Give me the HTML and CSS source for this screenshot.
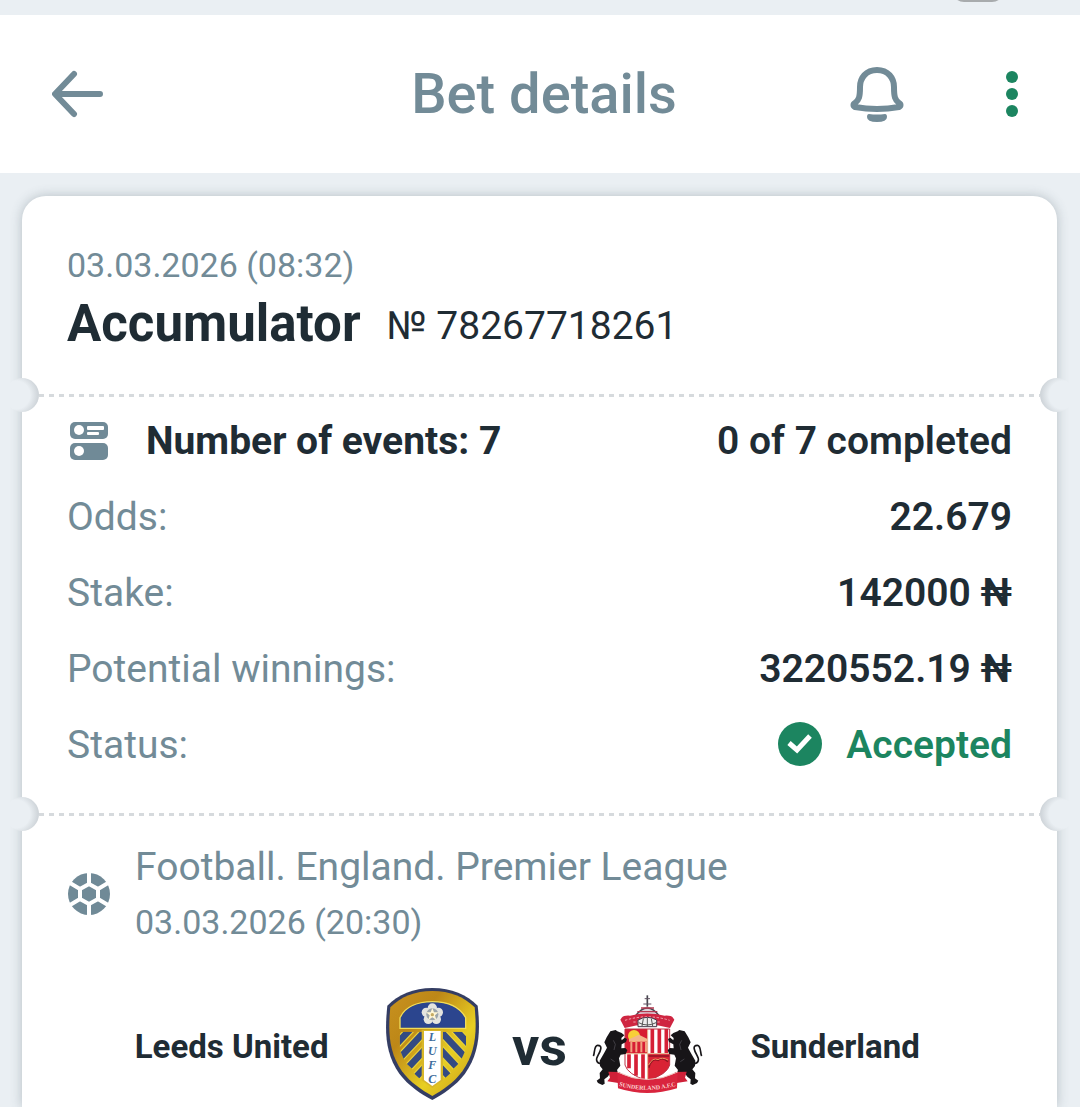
FILE: index.html
```
<!DOCTYPE html>
<html lang="en">
    <head>
        <title>Bet details</title>
        <meta charset="UTF-8">
        <meta name="viewport" content="width=device-width, initial-scale=1">
        <link rel="stylesheet" href="styles.css">
    </head>
    <body>

        <div class="status-bar"><span class="pill"></span></div>

        <header class="top">
            <button class="back" aria-label="Back">
                <svg width="52" height="48" viewBox="0 0 52 48">
                    <path d="M22 4 3 24l19 20M4 24h44" fill="none" stroke="currentColor" stroke-width="6" stroke-linecap="round" stroke-linejoin="round"/>
                </svg>
            </button>
            <h1>Bet details</h1>
            <div class="actions">
                <button aria-label="Notifications">
                    <svg width="56" height="60" viewBox="0 -1 56 60">
                        <path d="M28 5C17 5 11 13 11 22C11 32 10 35 6 38C4 39 4 41 6 42Q28 46 50 42C52 41 52 39 50 38C46 35 45 32 45 22C45 13 39 5 28 5Z" fill="none" stroke="currentColor" stroke-width="6" stroke-linejoin="round"/>
                        <path d="M20 49q8 1 16 0q2 0 2 3q0 5-10 5t-10-5q0-3 2-3z" fill="currentColor"/>
                    </svg>
                </button>
                <button class="more" aria-label="More">
                    <svg width="48" height="48" viewBox="0 0 48 48" fill="currentColor">
                        <circle cx="24" cy="7" r="6"/>
                        <circle cx="24" cy="24" r="6"/>
                        <circle cx="24" cy="41" r="6"/>
                    </svg>
                </button>
            </div>
        </header>

        <main class="ticket">
            <section class="summary">
                <time>03.03.2026 (08:32)</time>
                <div class="title">
                    <h2>Accumulator</h2>
                    <span>№ 78267718261</span>
                </div>
            </section>

            <div class="tear"></div>

            <section class="info">
                <div class="row events">
                    <svg width="44" height="40" viewBox="-2 0 44 40">
                        <rect x="1" y="1" width="38" height="17" rx="5" fill="#708a97"/>
                        <rect x="1" y="22" width="38" height="17" rx="5" fill="#708a97"/>
                        <g fill="#fff">
                            <circle cx="10" cy="9" r="5"/>
                            <circle cx="10" cy="30" r="5"/>
                            <rect x="18" y="5" width="17" height="4" rx="1"/>
                            <rect x="18" y="11" width="12" height="3" rx="1"/>
                        </g>
                    </svg>
                    <b>Number of events: 7</b>
                    <b class="value">0 of 7 completed</b>
                </div>
                <div class="row"><span>Odds:</span><b class="value">22.679</b></div>
                <div class="row"><span>Stake:</span><b class="value">142000 ₦</b></div>
                <div class="row"><span>Potential winnings:</span><b class="value">3220552.19 ₦</b></div>
                <div class="row">
                    <span>Status:</span>
                    <b class="value accepted">
                        <svg width="46" height="46" viewBox="0 0 46 46">
                            <circle cx="23" cy="22" r="22" fill="#1c8560"/>
                            <path d="M12 21l8 7 13-14" fill="none" stroke="#fff" stroke-width="5"/>
                        </svg>
                        Accepted
                    </b>
                </div>
            </section>

            <div class="tear"></div>

            <section class="event">
                <div class="league">
                    <!-- ball -->
                    <svg width="44" height="42" viewBox="-1 0 44 42">
                        <circle cx="21" cy="21" r="21" fill="#708a97"/>
                        <path d="M21 11l9 5v10l-9 5-9-5V16z" fill="none" stroke="#fff" stroke-width="4"/>
                        <path d="M21 11V0M30 16l10-6M30 26l10 6M21 31v11M12 26L2 32M12 16L2 10" stroke="#fff" stroke-width="4"/>
                    </svg>
                    <div>
                        <p>Football. England. Premier League</p>
                        <time>03.03.2026 (20:30)</time>
                    </div>
                </div>

                <div class="match">
                    <b class="team home">Leeds United</b>
                    <svg width="112" height="112" viewBox="18 39 336 336">
                        <defs>
                            <linearGradient id="gold" x1="0" y1="0" x2="1" y2="1">
                                <stop offset="0" stop-color="#c89220"/>
                                <stop offset=".3" stop-color="#bd8717"/>
                                <stop offset=".65" stop-color="#e8cf22"/>
                                <stop offset="1" stop-color="#c89a18"/>
                            </linearGradient>
                            <clipPath id="shield">
                                <path d="M89 170H288V220C278 255 252 288 222 312H150C120 288 98 255 89 220Z"/>
                            </clipPath>
                        </defs>
                        <path d="M187 39C245 39 290 59 323 92C332 170 328 235 285 296C258 332 218 358 187 375C154 358 115 332 88 296C45 235 44 170 52 92C84 59 130 39 187 39Z" fill="#343d63"/>
                        <path d="M187 48C240 48 283 66 314 97C321 170 318 231 277 289C252 323 216 347 187 363C158 347 121 323 96 289C56 231 54 170 61 97C91 66 135 48 187 48Z" fill="url(#gold)"/>
                        <path d="M90 160V128C106 94 145 80 187 80S268 94 287 128V160Z" fill="#2b458e" stroke="#f0dc58" stroke-width="4"/>
                        <g clip-path="url(#shield)" fill="none">
                            <g stroke="#e9d13a" stroke-width="27">
                                <path d="M75 212l60-64M92 246l92-98M118 274l90-96M140 304l60-64"/>
                                <path d="M301 212l-60-64M284 246l-92-98M258 274l-90-96M236 304l-60-64"/>
                            </g>
                            <g stroke="#344a82" stroke-width="20">
                                <path d="M75 212l60-64M92 246l92-98M118 274l90-96M140 304l60-64"/>
                                <path d="M301 212l-60-64M284 246l-92-98M258 274l-90-96M236 304l-60-64"/>
                            </g>
                        </g>
                        <path d="M155 164h64v152l-32 23-32-23z" fill="#d8b729"/>
                        <path d="M162 168h50v147l-25 18-25-18z" fill="#fff"/>
                        <g fill="#e4e4df">
                            <circle cx="187" cy="99" r="14"/>
                            <circle cx="205" cy="112" r="14"/>
                            <circle cx="199" cy="133" r="14"/>
                            <circle cx="175" cy="133" r="14"/>
                            <circle cx="169" cy="112" r="14"/>
                        </g>
                        <circle cx="187" cy="118" r="18" fill="#9ba4a9"/>
                        <path d="M187 99l5 13h14l-11 9 4 14-12-8-12 8 4-14-11-9h14z" fill="#fff6d5"/>
                        <circle cx="187" cy="119" r="5" fill="#c5aa62"/>
                        <text class="lufc" x="187" y="164">LUFC</text>
                    </svg>
                    <b class="vs">vs</b>
                    <svg width="112" height="112" viewBox="36 9 336 336">
                        <defs>
                            <g id="lion">
                                <path d="M80 157l11-18 16-4 5 4 13 5 8 7-9 8 1 7 9-8 7 4-3 9-13 7-1 12 12-1 6 7-5 11-15 2-5 11 4 22-10 13 7 18 10 11-3 7-16-2-4-15-13-11-9 12-10 8 1 13-7 4-13-6-4-7 10-7-1-16 9-11-8-10-1-16 13-22 9-17-8-16z" fill="#171518"/>
                                <path d="M69 235C49 238 46 224 54 211C62 198 69 181 53 181C41 181 45 205 40 213" fill="none" stroke="#171518" stroke-width="5"/>
                                <path d="M100 166l6 12-4 17M92 222l12 8" fill="none" stroke="#56535a" stroke-width="2"/>
                            </g>
                        </defs>
                        <path d="M202 31v34" stroke="#44444d" stroke-width="5"/>
                        <path d="M194 41h16M190 57h24" stroke="#625262" stroke-width="3"/>
                        <path d="M166 93q36-48 72 0z" fill="#ded5dc" stroke="#4c4350" stroke-width="4"/>
                        <path d="M172 80h60M183 69h39" stroke="#b53a50" stroke-width="4"/>
                        <path d="M121 104Q127 90 150 92Q202 79 254 92Q277 90 283 104L270 129Q202 109 134 129Z" fill="#cf2541"/>
                        <path d="M135 106q67-21 134 0M160 111h84" fill="none" stroke="#f0a7b0" stroke-width="3" stroke-dasharray="7 5"/>
                        <path d="M174 105q28-16 56 0v20h-56z" fill="#eee" stroke="#463a4a" stroke-width="3"/>
                        <path d="M176 113q26 14 52 0M190 101l-4 22M202 99v25M214 101l4 22" fill="none" stroke="#555" stroke-width="3"/>
                        <path d="M135 132H269V240Q262 268 202 287Q142 268 135 240Z" fill="#fff"/>
                        <path d="M135 132h68v74h-68z" fill="#d71d33"/>
                        <circle cx="162" cy="153" r="18" fill="#f7cf38"/>
                        <path d="M147 163l30-14 27 14v7h-57z" fill="#f4b58a"/>
                        <path d="M154 171v31M169 171v31M184 171v31M198 171v31" stroke="#f1a180" stroke-width="6"/>
                        <path d="M217 132v73M238 132v73M259 132v73M147 208v42M168 208v64M189 208v75" stroke="#d62036" stroke-width="11"/>
                        <path d="M203 206h66v34q-6 27-66 47z" fill="#d92335"/>
                        <path d="M204 213h64M206 248q8-30 28-22 14-12 30 4" fill="none" stroke="#8f1624" stroke-width="5"/>
                        <path d="M206 240q12-24 28-16 12-9 30 1" fill="none" stroke="#ee9862" stroke-width="3"/>
                        <path d="M203 132v154M135 206h134" stroke="#e8b991" stroke-width="3"/>
                        <path d="M135 132H269V240Q262 268 202 287Q142 268 135 240Z" fill="none" stroke="#bd3245" stroke-width="3"/>
                        <use href="#lion"/>
                        <use href="#lion" transform="translate(405 0) scale(-1 1)"/>
                        <path d="M85 260l35 1 5 20-10 13-33-5 8-11zM320 260l-35 1-5 20 10 13 33-5-8-11z" fill="#cf2038"/>
                        <path d="M112 261Q202 306 293 261L291 310Q202 338 114 310Z" fill="#d9253e"/>
                        <path d="M112 261Q202 306 293 261" fill="none" stroke="#efc1ba" stroke-width="3"/>
                        <path id="ribbon" d="M106 299Q202 330 299 299" fill="none"/>
                        <text class="safc"><textPath href="#ribbon" startOffset="50%">SUNDERLAND A.F.C</textPath></text>
                    </svg>
                    <b class="team">Sunderland</b>
                </div>
            </section>
        </main>

    </body>
</html>
```
FILE: styles.css
```
html {
    box-sizing: border-box;
}
*, *::before, *::after {
    box-sizing: inherit;
}
body {
    margin: 0;
    min-height: 100vh;
    display: flex;
    flex-direction: column;
    background: #eaeff3;
    color: #1f2c34;
    font-family: Roboto, sans-serif;
    font-size: 39px;
    line-height: 48px;
}
h1, h2, p {
    margin: 0;
}
svg {
    display: block;
    flex: none;
}
button {
    padding: 0;
    border: none;
    background: none;
    color: inherit;
    cursor: pointer;
}
time {
    display: block;
    font-size: 34px;
}

.status-bar {
    height: 15px;
    padding-right: 76px;
    display: flex;
    justify-content: flex-end;
    overflow: hidden;
}
    .status-bar .pill {
        width: 52px;
        height: 24px;
        margin-top: -22px;
        border-radius: 12px;
        background: #a8abad;
    }

.top {
    height: 158px;
    padding: 0 44px 0 52px;
    display: grid;
    grid-template-columns: 1fr auto 1fr;
    align-items: center;
    background: white;
    color: #728b97;
}
    .top h1 {
        font-size: 56px;
        font-weight: 500;
        line-height: 64px;
    }
    .top .back {
        justify-self: start;
    }
    .top .actions {
        display: flex;
        align-items: center;
        justify-content: flex-end;
        gap: 83px;
    }
    .top .more {color: #1c8560;}

.ticket {
    flex: 1;
    margin: 23px 23px 0 22px;
    border-radius: 24px 24px 0 0;
    background: white;
    box-shadow: 0 0 12px rgba(60, 80, 90, .3);
}
    .ticket section {
        padding: 0 45px;
    }
    .ticket .summary {
        padding-top: 45px;
        padding-bottom: 38px;
    }
    .summary time, .row span, .league {color: #728b97;}

.title {
    margin-top: 3px;
    display: flex;
    align-items: flex-end;
    gap: 26px;
}
    .title h2 {
        font-size: 51px;
        font-weight: 700;
        line-height: 64px;
    }
    .title span {
        line-height: 60px;
    }

/* perforated line with a notch on both sides */
.tear {
    position: relative;
    height: 3px;
    margin: 0 17px;
    background: repeating-linear-gradient(to right, #d6dadd 0 5px, transparent 5px 10px);
}
    .tear::before, .tear::after {
        content: '';
        position: absolute;
        top: -16px;
        width: 34px;
        height: 34px;
        border-radius: 50%;
        background: radial-gradient(circle at 11px 50%, #eaeff3 14px, #c9cfd4 24px);
    }
    .tear::before {left: -34px;}
    .tear::after {
        right: -34px;
        transform: scaleX(-1);
    }

.ticket .info {
    padding-top: 6px;
    padding-bottom: 30px;
}
.row {
    height: 76px;
    display: flex;
    align-items: center;
}
    .row b {font-weight: 700;}
    .row .value {
        margin-left: auto;
        font-weight: 600;
    }
    .row .accepted {
        display: flex;
        align-items: center;
        gap: 23px;
        color: #1c8560;
    }
.events {
    gap: 35px;
}

.ticket .event {
    padding-top: 23px;
}
.league {
    display: flex;
    align-items: center;
    gap: 24px;
}
    .league p {
        line-height: 56px;
    }
    .league time {
        line-height: 54px;
    }

.match {
    margin-top: 39px;
    display: grid;
    grid-template-columns: 1fr auto 104px auto 1fr;
    align-items: center;
}
    .match .team {
        padding: 6px 47px 0;
        font-size: 33px;
        font-weight: 700;
    }
    .match .home {text-align: right;}
    .match .vs {
        padding-top: 6px;
        font-size: 54px;
        text-align: center;
    }

.lufc {
    font: italic bold 36px "Liberation Serif", serif;
    fill: #3d6b9c;
    writing-mode: vertical-rl;
    text-orientation: upright;
}
.safc {
    font: bold 18px "Liberation Serif", serif;
    fill: #fbd5d2;
    text-anchor: middle;
}
```
